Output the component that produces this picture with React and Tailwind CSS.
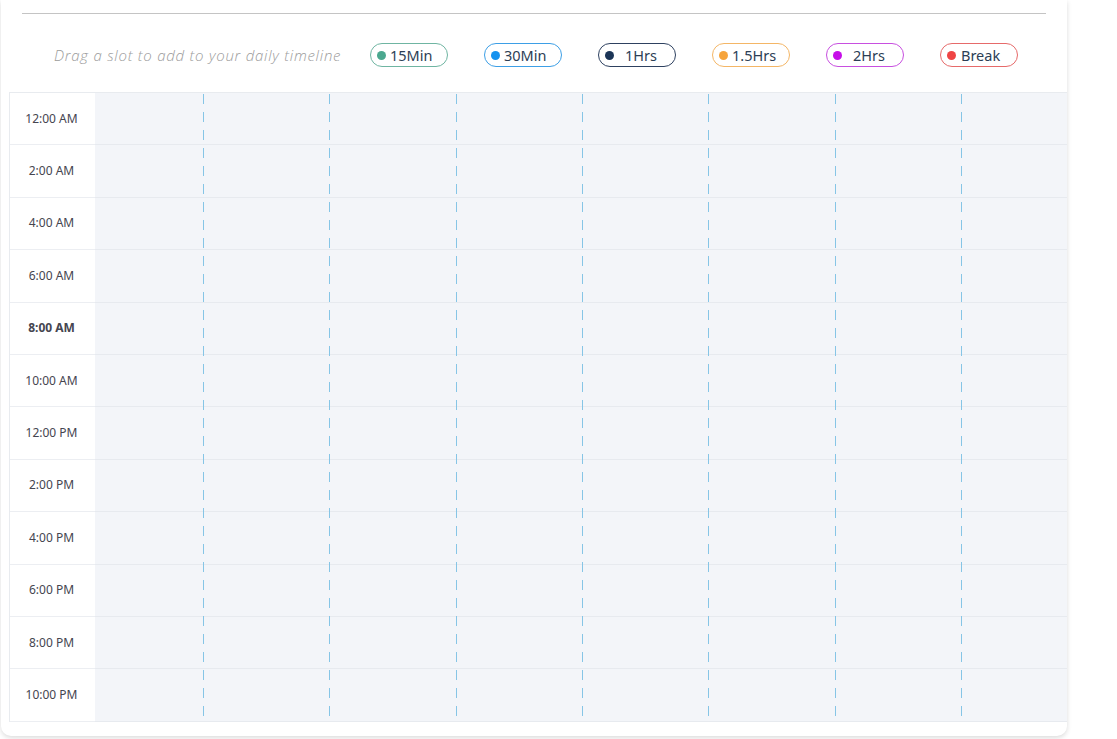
import React from 'react';

const slots = [
  { label: '15Min', color: '#4ba88f', border: '#6fb5a2', textMl: 'ml-[4px]' },
  { label: '30Min', color: '#1592ef', border: '#3d9fe6', textMl: 'ml-[4px]' },
  { label: '1Hrs', color: '#1c3557', border: '#2e4160', textMl: 'ml-[11px]' },
  { label: '1.5Hrs', color: '#f6a43c', border: '#f4b666', textMl: 'ml-[4px]' },
  { label: '2Hrs', color: '#c60ee8', border: '#c84fe0', textMl: 'ml-[11px]' },
  { label: 'Break', color: '#ef4444', border: '#e66a6a', textMl: 'ml-[5px]' },
];

const times = [
  '12:00 AM', '2:00 AM', '4:00 AM', '6:00 AM', '8:00 AM', '10:00 AM',
  '12:00 PM', '2:00 PM', '4:00 PM', '6:00 PM', '8:00 PM', '10:00 PM',
];

// x offsets of the dashed guides, relative to the slot area
const guides = [108, 234, 361, 487, 613, 740, 866];

const App = () => {
  return (
    <div className="w-[1117px] h-[739px] bg-white overflow-hidden">
      <div className="w-[1066px] ml-[1px] bg-white rounded-b-[10px] shadow-[0_2px_5px_rgba(0,0,0,0.14)] pl-[8px] pb-[14px]">
        {/* Divider */}
        <div className="pt-[13px]">
          <div className="ml-[13px] w-[1024px] border-t border-[#c4c4c4]" />
        </div>

        {/* Legend */}
        <div className="flex items-center pt-[29px] pb-[25px]">
          <div className="w-[361px] pl-[45px] text-[15px] tracking-[0.75px] italic font-light text-[#9b9b9b] font-['Open_Sans',sans-serif] whitespace-nowrap">
            Drag a slot to add to your daily timeline
          </div>
          <div className="flex gap-[36px]">
            {slots.map((s) => (
              <div
                key={s.label}
                className="w-[78px] h-[24px] rounded-full border flex items-center pl-[6px] font-['Noto_Sans',sans-serif] text-[14.5px] text-[#2c3e55]"
                style={{ borderColor: s.border }}
              >
                <span className="w-[9px] h-[9px] rounded-full shrink-0" style={{ backgroundColor: s.color }} />
                <span className={`${s.textMl} leading-none`}>{s.label}</span>
              </div>
            ))}
          </div>
        </div>

        {/* Timeline grid */}
        <div className="flex border-t border-l border-[#e8ebef] font-['Noto_Sans',sans-serif]">
          <div className="w-[85px] flex flex-col bg-white">
            {times.map((t) => (
              <div
                key={t}
                className={`h-[52.4px] border-b border-[#eceef2] flex items-center justify-center pr-[2px] text-[12px] text-[#454550] ${t === '8:00 AM' ? 'font-bold' : ''}`}
              >
                {t}
              </div>
            ))}
          </div>
          <div className="relative flex-1 bg-[#f3f5f9]">
            {times.map((t) => (
              <div key={t} className="h-[52.4px] border-b border-[#e7eaef]" />
            ))}
            {guides.map((x) => (
              <div
                key={x}
                className="absolute top-[1px] bottom-0 w-px bg-[repeating-linear-gradient(to_bottom,#86c5e6_0px,#86c5e6_10px,transparent_10px,transparent_18px)]"
                style={{ left: x }}
              />
            ))}
          </div>
        </div>
      </div>
    </div>
  );
};

export default App;
